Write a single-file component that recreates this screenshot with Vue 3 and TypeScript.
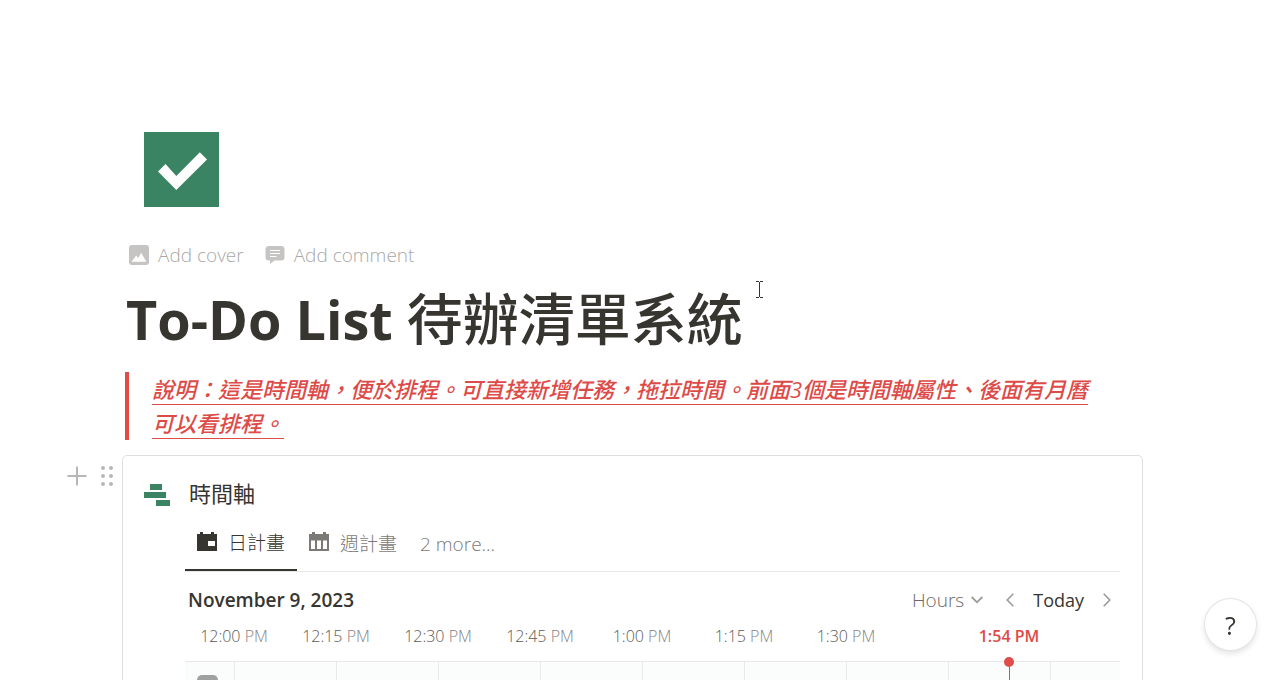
<script setup lang="ts">
interface Slot {
  clock: string
  period: string
}

const slots: Slot[] = ['12:00', '12:15', '12:30', '12:45', '1:00', '1:15', '1:30'].map((clock) => ({
  clock,
  period: 'PM',
}))
const columns = 9
</script>

<template>
  <main class="page" lang="zh-Hant">
    <svg class="page-icon" viewBox="0 0 75 75" role="img" aria-label="Done">
      <rect width="75" height="75" fill="#3a8363" />
      <path d="M14 39.5 21.5 32 32.3 44 55.8 20.3 63 27.5 32.3 58Z" fill="#fff" />
    </svg>

    <div class="page-actions">
      <button type="button" class="action">
        <svg width="20" height="20" viewBox="0 0 20 20" aria-hidden="true">
          <rect width="20" height="20" rx="3" fill="#c5c4c2" />
          <path d="M2.5 16.7 7.2 10.5 9.2 13 12.2 7.8 17.3 16.7Z" fill="#fff" />
        </svg>
        <span>Add cover</span>
      </button>
      <button type="button" class="action">
        <svg width="20" height="20" viewBox="0 0 20 20" aria-hidden="true">
          <path d="M4 1H16a3.5 3.5 0 0 1 3.5 3.500V12a3.500 3.500 0 0 1-3.500 3.500H9.500L5 19V15.500H4A3.500 3.500 0 0 1 .5 12V4.500A3.500 3.500 0 0 1 4 1Z" fill="#c5c4c2" />
          <path d="M5 5.500H15M5 8.500H15M5 11.500H11.500" stroke="#fff" stroke-width="1.200" />
        </svg>
        <span>Add comment</span>
      </button>
    </div>

    <h1 class="title">To-Do List <span class="title-han">待辦清單系統</span></h1>

    <blockquote class="note">
      <span class="note-text">說明：這是時間軸，便於排程。可直接新增任務，拖拉時間。前面3個是時間軸屬性、後面有月曆<br />可以看排程。</span>
    </blockquote>

    <div class="block">
      <div class="handles">
        <button type="button" aria-label="Add block">
          <svg width="20" height="20" viewBox="0 0 20 20" aria-hidden="true">
            <path d="M10 .5V19.500M.5 10H19.500" stroke="#b8b7b5" stroke-width="2" />
          </svg>
        </button>
        <button type="button" aria-label="Drag block">
          <svg width="12" height="20" viewBox="0 0 12 20" fill="#b8b7b5" aria-hidden="true">
            <circle cx="2" cy="2" r="2" /><circle cx="10" cy="2" r="2" />
            <circle cx="2" cy="10" r="2" /><circle cx="10" cy="10" r="2" />
            <circle cx="2" cy="18" r="2" /><circle cx="10" cy="18" r="2" />
          </svg>
        </button>
      </div>

      <section class="card">
        <header class="card-head">
          <svg width="26" height="22" viewBox="0 0 26 22" fill="#3a8363" aria-hidden="true">
            <path d="M6 0H18V6H6ZM0 8H22V14H0ZM12 16H26V22H12Z" />
          </svg>
          <h2>時間軸</h2>
        </header>

        <div class="view">
          <nav class="tabs">
            <button type="button" class="tab active">
              <svg width="20" height="22" viewBox="0 0 20 22" aria-hidden="true">
                <path d="M0 2H3V0H6V2H14V0H17V2H20V19H0Z" fill="#37352f" />
                <rect x="11" y="9" width="7" height="5" fill="#fff" />
              </svg>
              <span>日計畫</span>
            </button>
            <button type="button" class="tab">
              <svg width="20" height="24" viewBox="0 0 20 24" aria-hidden="true">
                <path d="M0 2H3V0H6V2H14V0H17V2H20V19H0Z" fill="#7d7976" />
                <path d="M2 8.500H6V17H2ZM8 8.500H12V17H8ZM14 8.500H18V17H14Z" fill="#fff" />
              </svg>
              <span>週計畫</span>
            </button>
            <button type="button" class="tab more">2 more...</button>
          </nav>

          <div class="toolbar">
            <h3>November 9, 2023</h3>
            <div class="controls">
              <button type="button" class="scale">
                <span>Hours</span>
                <svg width="12" height="8" viewBox="0 0 12 8" fill="none" stroke="#9b9a97" stroke-width="1.800" aria-hidden="true">
                  <path d="M.7 1 6 6.300 11.300 1" />
                </svg>
              </button>
              <button type="button" aria-label="Previous">
                <svg width="8" height="14" viewBox="0 0 8 14" fill="none" stroke="#9b9a97" stroke-width="1.600" aria-hidden="true">
                  <path d="M7.300 .8 1.200 7 7.300 13.200" />
                </svg>
              </button>
              <button type="button" class="today">Today</button>
              <button type="button" aria-label="Next">
                <svg width="8" height="14" viewBox="0 0 8 14" fill="none" stroke="#9b9a97" stroke-width="1.600" aria-hidden="true">
                  <path d="M.7 .8 6.800 7 .7 13.200" />
                </svg>
              </button>
            </div>
          </div>

          <div class="timeline">
            <div class="scale-row">
              <span v-for="slot in slots" :key="slot.clock" class="slot">
                {{ slot.clock }} <span class="period">{{ slot.period }}</span>
              </span>
            </div>
            <div class="grid">
              <div v-for="n in columns" :key="n" class="column"></div>
              <button type="button" class="row-chip" aria-label="Open row"></button>
            </div>
            <div class="now">
              <span class="now-label">1:54 PM</span>
              <span class="now-dot"></span>
              <span class="now-line"></span>
            </div>
          </div>
        </div>
      </section>
    </div>

    <svg class="pointer" width="7" height="17" viewBox="0 0 7 17" fill="none" stroke="#333" aria-hidden="true">
      <path d="M0 .5H3M4 .5H7M3.500 1V16M0 16.500H3M4 16.500H7" />
    </svg>
    <button type="button" class="help" aria-label="Help">?</button>
  </main>
</template>

<style>
body {
  margin: 0;
  background: #fff;
}
</style>

<style scoped>
.page {
  position: relative;
  box-sizing: border-box;
  height: 100vh;
  overflow: hidden;
  padding: 132px 131px 0 122px;
  color: #37352f;
  font-family: 'Open Sans', 'Noto Sans CJK TC', sans-serif;
  font-size: 19px;
  line-height: 28px;
}
button {
  display: inline-flex;
  align-items: center;
  margin: 0;
  padding: 0;
  border: 0;
  background: none;
  color: inherit;
  font: inherit;
  font-weight: 300;
  cursor: pointer;
}
svg {
  display: block;
  flex: none;
}
h1,
h2,
h3,
blockquote {
  margin: 0;
}
.page-icon {
  width: 75px;
  height: 75px;
  margin-left: 22px;
}
.page-actions {
  display: flex;
  gap: 21px;
  margin: 34px 0 0 7px;
  color: #a9a8a6;
}
.action {
  gap: 9px;
}
.title {
  margin: 12px 0 0 4px;
  font-size: 54px;
  line-height: 76px;
  font-weight: 700;
  white-space: nowrap;
}
.title-han {
  font-size: 56px;
  line-height: 56px;
  font-weight: 500;
}
.note {
  margin: 15px 0 0 3px;
  padding-left: 23px;
  border-left: 4px solid #e04c4b;
  color: #dd4b48;
  font-size: 22px;
  line-height: 34px;
  font-style: italic;
  font-weight: 500;
  white-space: nowrap;
}
.note-text {
  border-bottom: 1px solid #dd4b48;
}
.block {
  position: relative;
  margin-top: 15px;
}
.handles {
  position: absolute;
  top: 11px;
  right: 100%;
  display: flex;
  gap: 14px;
  margin-right: 9px;
}
.card {
  padding: 22px 22px 0 21px;
  border: 1px solid #dfdfde;
  border-radius: 5px;
}
.card-head {
  display: flex;
  align-items: center;
  gap: 19px;
}
.card-head h2 {
  padding-bottom: 4px;
  font-size: 22px;
  line-height: 30px;
  font-weight: 400;
}
.view {
  margin-left: 41px;
}
.tabs {
  display: flex;
  height: 59px;
  border-bottom: 1px solid #e9e9e7;
}
.tab {
  gap: 11px;
  height: 59px;
  padding: 4px 12px 0;
  box-sizing: border-box;
  color: #7d7976;
}
.tab.active {
  border-bottom: 2px solid #37352f;
  color: #37352f;
}
.tab.more {
  padding-left: 11px;
}
.toolbar {
  display: flex;
  justify-content: space-between;
  align-items: center;
  padding: 14px 9px 0 3px;
}
.toolbar h3 {
  font-size: 19px;
  font-weight: 600;
}
.controls {
  display: flex;
  align-items: center;
  gap: 19px;
}
.scale {
  gap: 7px;
  margin-right: 4px;
  color: #6d6966;
}
.today {
  font-weight: 400;
  font-size: 18px;
}
.timeline {
  position: relative;
}
.scale-row {
  display: flex;
  gap: 4px;
  padding: 8px 0 11px;
  font-size: 16px;
}
.slot {
  flex: none;
  width: 98px;
  color: #5d5956;
  font-weight: 300;
  text-align: center;
  white-space: nowrap;
}
.period {
  color: #85827f;
}
.grid {
  position: relative;
  display: flex;
  height: 120px;
  overflow: hidden;
  padding-left: 49px;
  border-top: 1px solid #e6e7e6;
  background: #fbfdfc;
}
.column {
  box-sizing: border-box;
  flex: none;
  width: 102px;
  border-left: 1px solid #e9eae9;
}
.row-chip {
  position: absolute;
  top: 13px;
  left: 12px;
  width: 21px;
  height: 21px;
  border-radius: 5px;
  background: #a0a09f;
}
.now {
  position: absolute;
  top: 8px;
  left: 784px;
  display: flex;
  flex-direction: column;
  align-items: center;
  width: 80px;
  color: #dd4b48;
}
.now-label {
  font-size: 16px;
  font-weight: 600;
}
.now-dot {
  width: 10px;
  height: 10px;
  margin-top: 7px;
  border-radius: 50%;
  background: #e04c4b;
}
.now-line {
  width: 1px;
  height: 100px;
  background: #dd4b48;
}
.pointer {
  position: absolute;
  top: 281px;
  left: 756px;
}
.help {
  position: fixed;
  right: 18px;
  bottom: 30px;
  justify-content: center;
  width: 51px;
  height: 51px;
  border-radius: 50%;
  background: #fff;
  box-shadow: 0 0 0 1px #e4e4e3, 0 3px 6px rgba(15, 15, 15, 0.14);
  font-size: 25px;
  font-weight: 400;
}
</style>
